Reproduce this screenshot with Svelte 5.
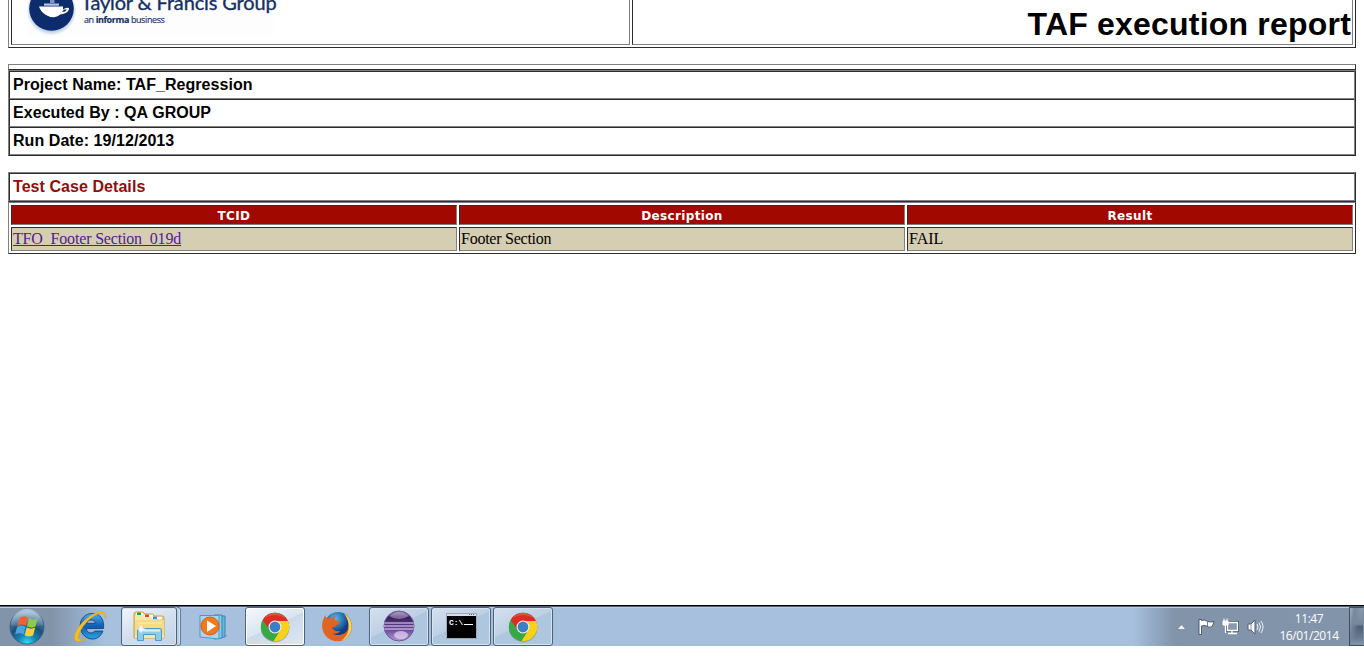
<script>
  const details = ['Project Name: TAF_Regression', 'Executed By : QA GROUP', 'Run Date: 19/12/2013'];
  const columns = ['TCID', 'Description', 'Result'];
</script>

{#snippet chrome()}
  <svg class="icon" width="30" height="30" viewBox="0 0 30 30">
    <circle cx="15" cy="15" r="14.2" fill="#38a745" />
    <path d="M2.7 7.9A14.2 14.2 0 0 1 27.9 9H15a6.2 6.2 0 0 0-5.8 8.2Z" fill="#dc2c24" />
    <path d="M27.9 9A14.2 14.2 0 0 1 13.6 29.1L20.4 18A6.2 6.2 0 0 0 15 9Z" fill="#fbd116" />
    <path d="M4.5 5.9A14 14 0 0 1 26 6.2Q15 0 4.5 5.9Z" fill="#f0695d" opacity=".6" />
    <circle cx="15" cy="15" r="6.5" fill="#f1f4f2" />
    <circle cx="15" cy="15" r="5.4" fill="#3c7fc4" />
  </svg>
{/snippet}

<div class="screen">
  <main>
    <header class="outer head">
      <div class="cell brand">
        <div class="logo">
          <svg class="emblem" width="50" height="38" viewBox="0 0 50 38">
            <defs>
              <radialGradient id="halo"><stop offset=".7" stop-color="#8ea9d2" /><stop offset="1" stop-color="#fdfdfe" /></radialGradient>
            </defs>
            <circle cx="24.500" cy="10.500" r="25" fill="url(#halo)" />
            <circle cx="24.500" cy="8.500" r="22.300" fill="#0c2c6c" />
            <path d="M12 6.500h24v3q3-2.500 6-1.500c0 4-4 6-9 6.500-3 3-8 3.500-12 1.500-4-2-7-4-9-9.500Z" fill="#fff" />
            <path d="M17 3.500h15v2.200H17z" fill="#b6c5df" /><path d="M23 0h4.500v3H23z" fill="#8095bd" />
            <path d="m35 12 2-2.500h3l-2 2Z" fill="#0c2c6c" />
          </svg>
          <div class="wordmark">
            <div class="name">Taylor &amp; Francis Group</div>
            <div class="tag">an <b>informa</b> business</div>
          </div>
        </div>
      </div>
      <div class="cell title">TAF execution report</div>
    </header>

    <div class="outer empty"></div>
    <section class="stack">
      {#each details as line}
        <div class="line"><span>{line}</span></div>
      {/each}
    </section>

    <section class="stack cases">
      <div class="line red"><span>Test Case Details</span></div>
    </section>
    <div class="outer grid">
      {#each columns as c}
        <div class="cell th">{c}</div>
      {/each}
      <div class="cell td"><a href="#case">TFO_Footer Section_019d</a></div>
      <div class="cell td"><span class="desc">Footer Section</span></div>
      <div class="cell td"><span class="res">FAIL</span></div>
    </div>
  </main>

  <footer>
    <div class="slot start">
      <svg width="36" height="36" viewBox="0 0 36 36">
        <defs>
          <radialGradient id="orb" cx=".5" cy=".98" r=".9"><stop offset="0" stop-color="#35e0f8" /><stop offset=".3" stop-color="#1384b4" /><stop offset=".6" stop-color="#1e4f78" /><stop offset="1" stop-color="#6f97b6" /></radialGradient>
          <linearGradient id="shine" x2="0" y2="1"><stop stop-color="#d4e6f1" stop-opacity=".75" /><stop offset="1" stop-color="#a3c2d8" stop-opacity=".12" /></linearGradient>
        </defs>
        <circle cx="18" cy="18" r="17" fill="url(#orb)" stroke="#35597b" stroke-width=".8" />
        <path d="M2 16a16 16 0 0 1 32 0Q18 20 2 16Z" fill="url(#shine)" />
        <path d="M10.500 9q4-3 8.500-.5l-2 8.300q-4.500-2.500-8.500 0Z" fill="#ee6332" />
        <path d="M20 9.300q4 2.500 8.700.3l-2.300 8q-4 2.300-8.500-.3Z" fill="#91c94b" />
        <path d="M8.200 17.700q4.200-2.600 8.400 0l-2 7.800q-4-2.400-8.500 0Z" fill="#4ba4df" />
        <path d="M17.700 18.300q4 2.500 8.500.3l-2.200 7.900q-4.300 2.300-8.400-.3Z" fill="#fccd3c" />
      </svg>
    </div>
    <div class="slot ie">
      <svg width="36" height="34" viewBox="0 0 36 34">
        <defs><linearGradient id="blue" x2="0" y2="1"><stop stop-color="#4fb4ec" /><stop offset=".5" stop-color="#0f5bb0" /><stop offset="1" stop-color="#2aa6e2" /></linearGradient></defs>
        <path d="M31.500 19.500H14.300c.4 5 6.300 5.700 8.400 2.600h8.200C28 29.500 22 31 17 29.500 4 25 5.500 4.500 20.500 4.500c8 0 12 6.500 11 15ZM14.600 14.300h8.700c-.4-4.500-8-4.400-8.700 0Z" fill="url(#blue)" stroke="#134c8e" stroke-width="1" />
        <path d="M33.500 9.500C36 2 28 0 18 7 7 14.500-1.500 28.500 4 32c2.300 1.500 6.500-.5 10-3-4 1.800-7 2-7.500-.5C6 24 13 12.500 22 7c6-4 10.500-3.500 11.500 2.500Z" fill="#f5bd25" stroke="#d79812" stroke-width=".4" />
      </svg>
    </div>
    <div class="explorer-group">
      <div class="task explorer">
        <svg width="34" height="32" viewBox="0 0 34 32">
          <path d="M2 3q0-2 2-2h7l2 2h8l1 2h8q2 0 2 2v20H2Z" fill="#e8cf73" stroke="#c6a344" />
          <path d="M4 3h8v3h8v3h12v18H3V5Z" fill="#f7e7a6" />
          <path d="M4 3h7M12 5h9M20 7h10" stroke="#fff" stroke-width="2.500" />
          <path d="M5 2.800h4" stroke="#19a631" stroke-width="2.500" /><path d="M13 4.800h4" stroke="#dc4532" stroke-width="2.500" /><path d="M21 6.800h4" stroke="#2a98db" stroke-width="2.500" />
          <path d="M3 9h29v15H3Z" fill="#f4dc86" /><path d="M5 12h25" stroke="#fbeeb8" />
          <path d="M5.500 29.500V18.500q0-1 1-1h22q1 0 1 1v11h-6v-6h-12v6Z" fill="#8dcdec" stroke="#5299c5" />
          <path d="M7 18.500h21v2H7Z" fill="#d8f2fb" /><path d="m9 13 1 4 4 1-4 1-1 4-1-4-4-1 4-1Z" fill="#fff" />
        </svg>
      </div>
      <div class="edge"></div>
    </div>
    <div class="slot media">
      <svg width="32" height="28" viewBox="0 0 32 28">
        <path d="m20 25 9-2-5-2Z" fill="#688cad" opacity=".6" />
        <path d="M18 3h8v21l-8 1Z" fill="#69b5db" stroke="#3784b5" />
        <path d="M15 2h8v23l-8 1Z" fill="#8ccbe5" stroke="#3784b5" />
        <path d="M1 2.500h19V26L1 24Z" fill="#a4d8ee" stroke="#4b9ac4" />
        <circle cx="11" cy="13" r="9" fill="#f3791d" stroke="#db5c12" /><path d="M8 7.500 17 13l-9 6Z" fill="#fff" />
      </svg>
    </div>
    <div class="task active">{@render chrome()}</div>
    <div class="slot fox">
      <svg width="32" height="32" viewBox="0 0 32 32">
        <defs><radialGradient id="globe" cx=".4" cy=".25"><stop stop-color="#55bdeb" /><stop offset="1" stop-color="#113f83" /></radialGradient></defs>
        <circle cx="17" cy="14.500" r="13.500" fill="url(#globe)" />
        <path d="M23 3c6 3 9 9 7.300 16.500-3 9.500-12 13-20 9.500C3 25.500 0 18.500 1.500 11c.7-3.500 2-5.500 3-7 0 2 .5 2.500 1.500 3.500 2-.5 4-.5 5 0 1.500-2 3-2.500 4.500-3-2 2.500-2 3.500-1 5l4 .8c.3 2-1.800 2.700-3.500 4-.2 2-2 2-4 2 1 3.500 5 4.700 8.500 3.700-2 2.500-5 3-8 2.500 6 3.500 14 1 16-5.500 1-5-.5-9-4.500-14Z" fill="#e36322" />
        <path d="M23 2.500c6 3.500 9 10 7 17-1.500 5-5 8.500-10 10.500 4-3 7-6.500 7.500-12C28 12 27 7 23 2.500Z" fill="#fbd956" />
      </svg>
    </div>
    <div class="task raised">
      <svg width="32" height="32" viewBox="0 0 32 32">
        <defs><linearGradient id="ecl" x2="0" y2="1"><stop stop-color="#a58bbb" /><stop offset=".2" stop-color="#37205d" /><stop offset=".6" stop-color="#654493" /><stop offset="1" stop-color="#b99bd8" /></linearGradient></defs>
        <circle cx="16" cy="16" r="15" fill="url(#ecl)" stroke="#705595" />
        <path d="M6 6q10-8 20 0-10 6-20 0Z" fill="#c9b6da" opacity=".5" /><ellipse cx="18" cy="25" rx="7" ry="4" fill="#f3e7ff" opacity=".6" />
        <path d="M1.500 13h29M1 16h30M1.500 19h29" stroke="#e9dcf5" stroke-width="1.200" />
      </svg>
    </div>
    <div class="task raised">
      <svg width="31" height="26" viewBox="0 0 31 26">
        <path d="M.5.5h30v25H.5Z" fill="#000" stroke="#9eabb7" /><path d="M1 1h29v2H1Z" fill="#d9dfe6" /><path d="M23 1.500h6" stroke="#667" stroke-dasharray="1 1" />
        <text x="3" y="12" class="prompt">C:\</text><path d="M18 11.500h9" stroke="#fff" />
      </svg>
    </div>
    <div class="task">{@render chrome()}</div>

    <div class="tray">
      <svg class="up" width="9" height="6" viewBox="0 0 9 6"><path d="m.5 5.300 4-4.500 4 4.500Z" fill="#fff" stroke="#53677c" stroke-width=".4" /></svg>
      <svg class="flag" width="17" height="18" viewBox="0 0 17 18"><path d="M1 1.500h2.500v1Q7 1 9.500 3.500q3 1 6.500 0-1 4-2.500 5.500-3 .7-5-1-2.500-1-5 0v8.500H1Z" fill="#fff" stroke="#3f5064" stroke-width=".9" /><path d="M9.500 3.500v4.700" stroke="#708296" /></svg>
      <svg class="net" width="17" height="17" viewBox="0 0 17 17"><path d="M5.500 4.500h10v8h-10Z" fill="#899aad" stroke="#3f5165" stroke-width="3" /><path d="M5.500 4.500h10v8h-10ZM10 13v2M6 15.500h9M3.500 7v8" fill="#899aad" stroke="#fff" stroke-width="1.300" /><path d="M1 3h5v4H1ZM2 .5v3M5 .5v3" fill="#fff" stroke="#fff" /></svg>
      <svg class="sound" width="17" height="16" viewBox="0 0 17 16"><path d="M1 5h3l4-4v14l-4-4H1Z" fill="#fff" stroke="#4e6074" /><path d="M4 5v6" stroke="#8798aa" /><path d="M10 5q2 3 0 6M12 3.500q3 4.500 0 9M14 2q4 6 0 12" fill="none" stroke="#eef3f8" /></svg>
      <div class="clock"><span>11:47</span><span>16/01/2014</span></div>
      <div class="desk"></div>
    </div>
  </footer>
</div>

<style>
  :global(body) { margin: 0; background: #fff; }
  * { box-sizing: border-box; }
  .screen { width: 1364px; height: 666px; overflow: hidden; background: #fff; display: flex; flex-direction: column; }
  main { height: 605px; padding: 0 8px; flex: none; }
  .outer { border: 1px solid; border-color: #808080 #2c2c2c #2c2c2c #808080; }
  .cell { border: 1px solid; border-color: #2c2c2c #808080 #808080 #2c2c2c; }
  .head { height: 48px; border-top: 0; padding: 0 2px 2px; display: grid; grid-template-columns: 619px 721px; column-gap: 2px; }
  .head .cell { border-top: 0; height: 45px; overflow: hidden; }
  .logo { display: flex; width: 246px; height: 37px; margin-left: 15px; background: #fdfdfd; }
  .emblem { flex: none; }
  .wordmark { font-family: "Open Sans", sans-serif; color: #15305f; white-space: nowrap; margin-left: 3px; }
  .name { font: 400 20px/24px "Lato", sans-serif; letter-spacing: -.15px; margin: -10px 0 0 1px; -webkit-text-stroke: .35px #15305f; }
  .tag { font-size: 9px; line-height: 12px; margin: 0 0 0 4px; letter-spacing: -.4px; -webkit-text-stroke: .15px #15305f; }
  .title { font: bold 32px/36px "Liberation Sans", Arial, sans-serif; letter-spacing: .2px; text-align: right; padding: 6px 1px 0 0; }
  .empty { margin-top: 16px; height: 6px; }
  .stack { border: 1px solid; border-color: #808080 #2c2c2c #2c2c2c #808080; }
  .line { height: 28px; border: solid; border-width: 1px; border-color: #2c2c2c #808080 #808080 #2c2c2c; padding: 0 3px; font: bold 16px/25px "Liberation Sans", Arial, sans-serif; letter-spacing: .06px; }
  .cases { margin-top: 16px; }
  .red { color: #8b1010; }
  .grid { height: 52px; padding: 2px; display: grid; grid-template-columns: repeat(3, 446px); grid-template-rows: 20px 24px; gap: 2px; }
  .th { background: #a00800; color: #fff; text-align: center; font: bold 12px/19px "DejaVu Sans", Verdana, sans-serif; letter-spacing: .35px; padding-top: 1px; }
  .td { background: #d6ceb2; font: 16px/22px "Liberation Serif", "Times New Roman", serif; padding-left: 1px; white-space: nowrap; }
  a { color: #551a8b; letter-spacing: -.17px; text-decoration-skip-ink: none; }
  .desc { letter-spacing: -.25px; }
  footer { height: 41px; flex: none; display: flex; border-top: 1px solid #000; background: linear-gradient(#4d5f72 0 1px, #b8cde3 1px 2px, transparent 2px), linear-gradient(90deg, #8294aa 0, #8294aa 52px, #a6c0de 105px, #a6c0de 1133px, #8294aa 1174px); }
  .slot { display: flex; align-items: center; justify-content: center; flex: none; padding-top: 1px; }
  .start { width: 54px; padding-bottom: 0; }
  .ie { width: 67px; padding-left: 5px; padding-bottom: 2px; }
  .explorer-group { display: flex; width: 60px; }
  .edge { width: 4px; margin-top: 1px; border: 1px solid #657c96; border-left: 0; border-radius: 0 3px 3px 0; background: #bcd0e5; box-shadow: inset -1px 0 #d5e3f0; }
  .media { width: 64px; padding-left: 3px; padding-top: 2px; }
  .fox { width: 64px; }
  .task { width: 60px; height: 39px; margin: 1px 2px 0 0; flex: none; display: flex; align-items: center; justify-content: center; border: 1px solid #4e6279; border-radius: 3px; background: linear-gradient(155deg, #d4e0ef 0%, #bed0e5 46%, #afc6df 47%, #afc6df 100%); box-shadow: inset 0 0 0 1px #d6e3f1; }
  .raised { padding-bottom: 2px; }
  .explorer { width: 56px; margin-right: 0; padding-top: 1px; background: linear-gradient(155deg, #f0f5fa, #d3dfee 50%, #c3d3e6); }
  .active { margin-right: 0; background: linear-gradient(155deg, #f5f8fc, #dae5f1 48%, #cbd9e9 49%, #e0e8f2); box-shadow: inset 0 0 0 1px #fff; }
  .icon { filter: drop-shadow(0 1px 0 #60758b66); }
  .prompt { fill: #fff; font: bold 8px "Liberation Mono", monospace; }
  .tray { margin-left: auto; display: flex; align-items: center; padding-top: 1px; color: #fff; }
  .up { margin: 1px 12px 0 0; }
  .flag { margin-right: 7px; }
  .net { margin-right: 8px; }
  .sound { margin-right: 15px; }
  .clock { width: 60px; display: flex; flex-direction: column; align-items: center; font: 12px/17px "Open Sans", "Noto Sans", sans-serif; white-space: nowrap; letter-spacing: -.45px; padding-top: 1px; }
  .desk { margin-left: 10px; width: 15px; height: 39px; border: 1px solid #3d4f64; border-right-color: #7b8da2; background: linear-gradient(100deg, #a2b1c1 0, #76889c 25%, transparent 60%), linear-gradient(#8a9bae 0, #74869b 44%, #4f6175 50%, #66798f 80%, #8496a9); }
</style>
